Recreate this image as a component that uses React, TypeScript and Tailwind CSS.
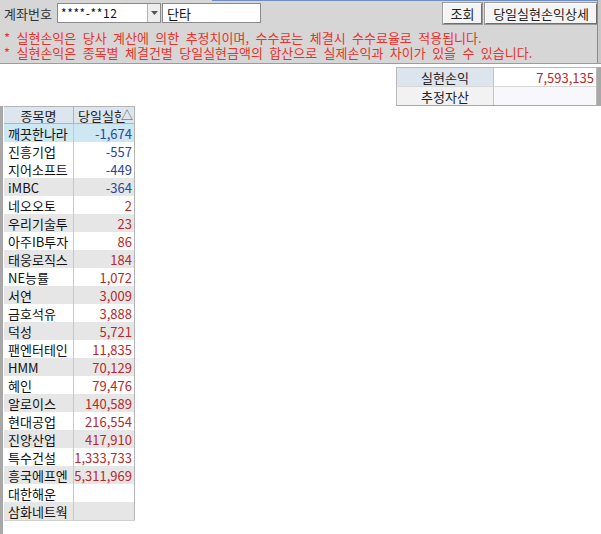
import React from "react";

const rows: [string, string][] = [
  ["깨끗한나라", "-1,674"],
  ["진흥기업", "-557"],
  ["지어소프트", "-449"],
  ["iMBC", "-364"],
  ["네오오토", "2"],
  ["우리기술투", "23"],
  ["아주IB투자", "86"],
  ["태웅로직스", "184"],
  ["NE능률", "1,072"],
  ["서연", "3,009"],
  ["금호석유", "3,888"],
  ["덕성", "5,721"],
  ["팬엔터테인", "11,835"],
  ["HMM", "70,129"],
  ["혜인", "79,476"],
  ["알로이스", "140,589"],
  ["현대공업", "216,554"],
  ["진양산업", "417,910"],
  ["특수건설", "1,333,733"],
  ["흥국에프엔", "5,311,969"],
  ["대한해운", ""],
  ["삼화네트웍", ""],
];

function Btn({ children, w }: { children: React.ReactNode; w: string }) {
  return (
    <div
      className={`${w} h-[21px] flex items-center justify-center bg-[#f4f4f4] border border-t-[#ffffff] border-l-[#ffffff] border-r-[#6e6e6e] border-b-[#6e6e6e] outline outline-1 outline-[#9a9a9a] text-[#222] leading-none`}
    >
      {children}
    </div>
  );
}

export default function App() {
  return (
    <div className="w-[601px] h-[534px] bg-white overflow-hidden flex flex-col font-['Noto_Sans_CJK_KR',sans-serif] text-[13px] leading-none text-[#222] [word-spacing:3.5px]">
      {/* top panel */}
      <div className="h-[64px] shrink-0 bg-[#d6d6d6] border-b border-[#9c9c9c] flex">
        <div className="flex-1 flex flex-col">
          <div className="h-px flex">
            <div className="w-[212px]" />
            <div className="flex-1 bg-[#6f8fbf]" />
          </div>
          <div className="flex items-center pl-[4px] pr-0 pt-[2px] h-[22px]">
            <div className="w-[53px] text-[#333]">계좌번호</div>
            <div className="w-[104px] h-[20px] flex bg-white border border-[#8a8a8a]">
              <div className="flex-1 flex items-center pl-[3px] text-[12px] tracking-[0.6px] text-[#111] [word-spacing:0px]">
                ****-**12
              </div>
              <div className="w-[13px] h-full bg-[#eeeeee] border-l border-[#b4b4b4] flex items-center justify-center">
                <svg width="7" height="4" viewBox="0 0 7 4">
                  <polygon points="0,0 7,0 3.5,4" fill="#555" />
                </svg>
              </div>
            </div>
            <div className="ml-[1px] w-[99px] h-[20px] bg-white border border-[#8a8a8a] flex items-center pl-[4px] text-[#111]">
              단타
            </div>
            <div className="flex-1" />
            <Btn w="w-[39px]">조회</Btn>
            <div className="w-[3px]" />
            <Btn w="w-[112px]">당일실현손익상세</Btn>
          </div>
          <div className="pl-[4px] pt-[7px] text-[#e8322c] flex flex-col whitespace-nowrap">
            <div className="h-[15px] leading-[15px]">* 실현손익은 당사 계산에 의한 추정치이며, 수수료는 체결시 수수료율로 적용됩니다.</div>
            <div className="h-[15px] leading-[15px]">* 실현손익은 종목별 체결건별 당일실현금액의 합산으로 실제손익과 차이가 있을 수 있습니다.</div>
          </div>
        </div>
        <div className="w-[4px] border-l border-[#8c8c8c] bg-[#c8c8c8]" />
      </div>

      {/* summary */}
      <div className="flex justify-end pt-[3px] shrink-0">
        <div className="flex flex-col border-b border-[#a8a8a8]">
          <div className="flex border border-[#b8b8b8] border-b-0 mr-[4px]">
            <div className="w-[97px] h-[18px] bg-[#dce4ee] border-r border-[#c4c4c4] flex items-center justify-center text-[#222]">
              실현손익
            </div>
            <div className="w-[102px] h-[18px] bg-white flex items-center justify-end pr-[2px] text-[#b82a2a]">
              7,593,135
            </div>
          </div>
          <div className="flex border border-[#b8b8b8] border-t-[#d8d8d8] border-b-0 mr-[4px]">
            <div className="w-[97px] h-[18px] bg-[#f2f2f2] border-r border-[#c4c4c4] flex items-center justify-center text-[#222]">
              추정자산
            </div>
            <div className="w-[102px] h-[18px] bg-[#f8f8fc]" />
          </div>
        </div>
        <div className="w-[4px] bg-[#a8a8a8] -ml-[4px] self-stretch" />
      </div>

      {/* grid */}
      <div className="flex flex-1 min-h-0">
        <div className="w-[3px] bg-[#a8a8a8]" />
        <div className="w-[132px] pl-px flex flex-col">
          <div className="h-[18px] flex bg-[#dde5ee] border border-[#b4b4b4] border-l-0">
            <div className="w-[70px] border-r border-[#b4b4b4] flex items-center justify-center text-[#222]">
              종목명
            </div>
            <div className="relative w-[60px] overflow-hidden flex items-center pl-[4px] text-[#222] whitespace-nowrap">
              당일실현
              <span className="absolute right-[1px] top-[2px] text-[12px] text-[#555] bg-[#dde5ee] leading-none">△</span>
            </div>
          </div>
          {rows.map(([name, val], i) => {
            const bg =
              i === 0 ? "bg-[#cde7f3]" : i % 2 === 1 && i !== 1 ? "bg-[#e6e6e6]" : "bg-white";
            const neg = val.startsWith("-");
            return (
              <div key={name} className={`h-[18px] flex ${bg}`}>
                <div className="w-[70px] border-r border-[#c8c8c8] flex items-center pl-[4px] text-[#111] whitespace-nowrap overflow-hidden">
                  {name}
                </div>
                <div
                  className={`w-[61px] border-r border-[#b4b4b4] flex items-center justify-end pr-[2px] ${
                    neg ? "text-[#2a46a0]" : "text-[#b82a2a]"
                  }`}
                >
                  {val}
                </div>
              </div>
            );
          })}
          <div className="h-px bg-[#d0d0d0]" />
        </div>
      </div>
    </div>
  );
}
